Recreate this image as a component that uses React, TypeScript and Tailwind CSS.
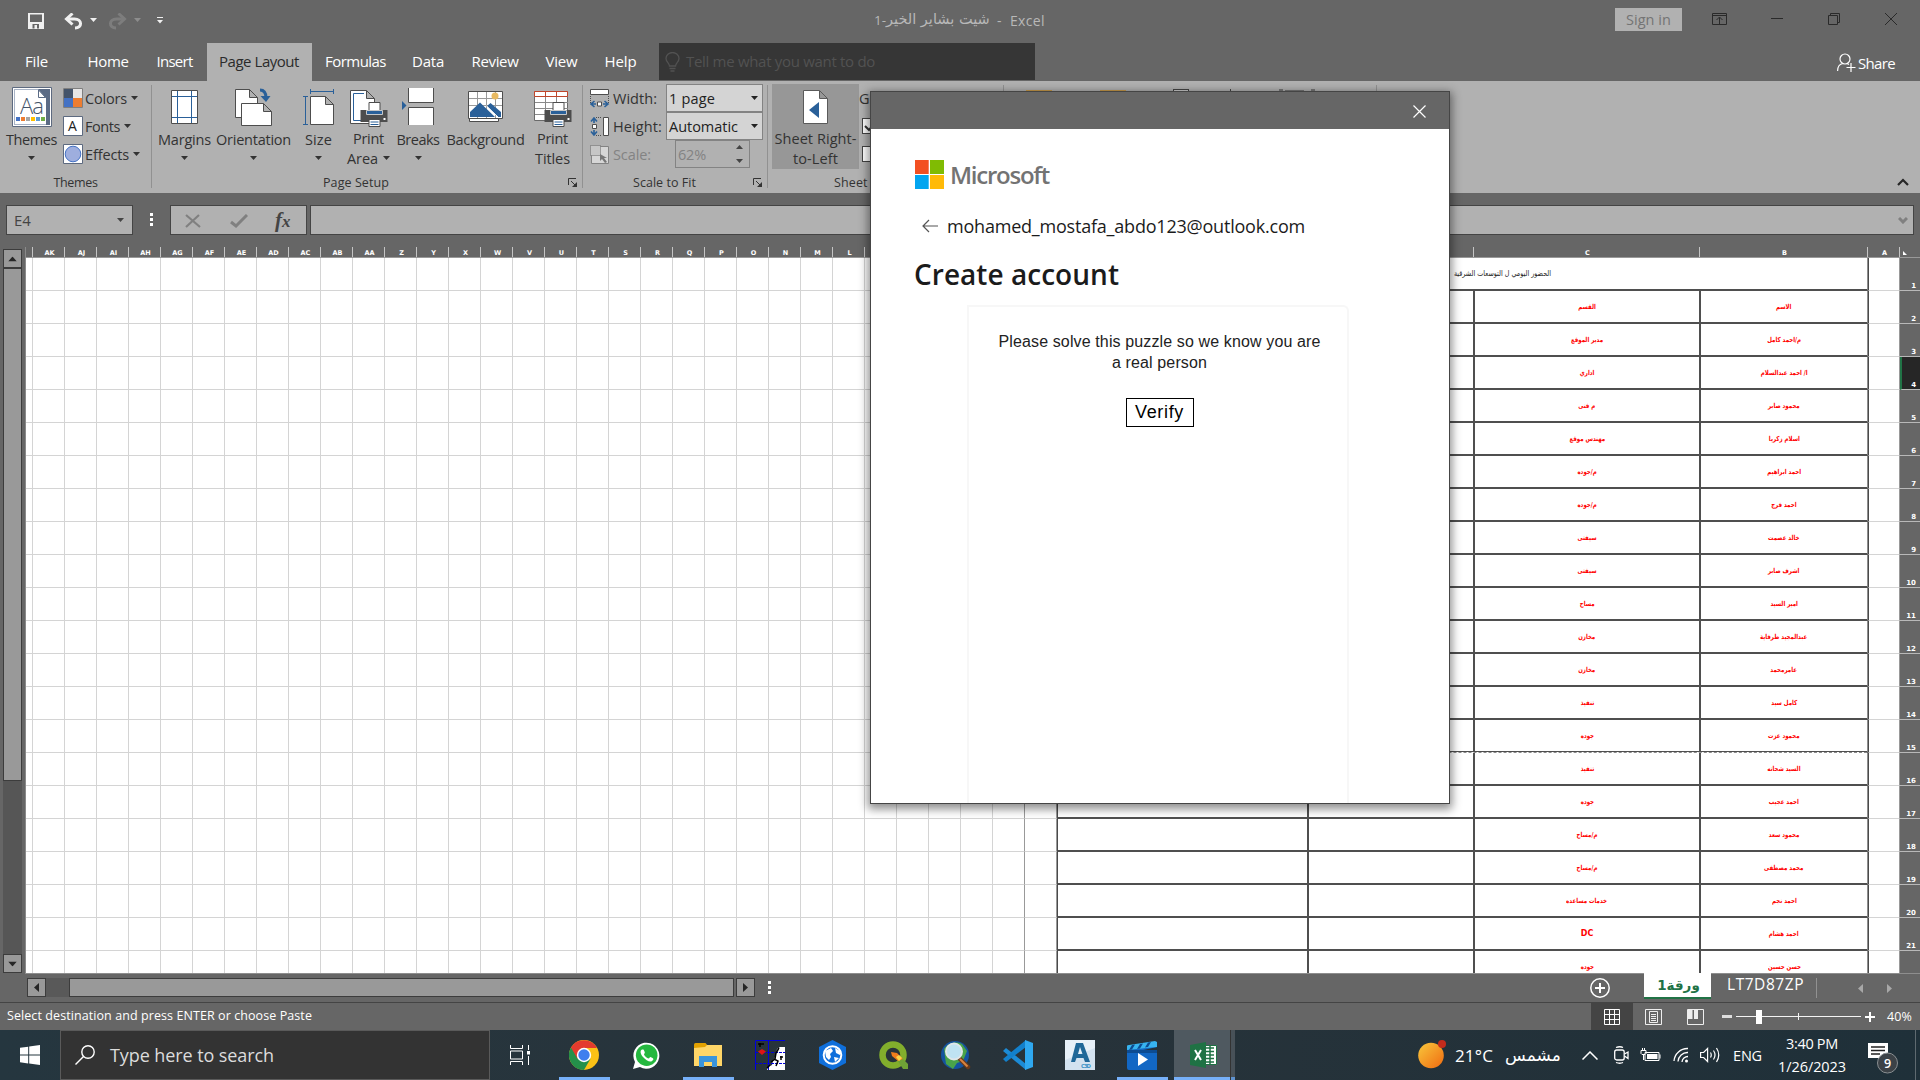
import React, { useLayoutEffect, useRef, useState } from "react";

/* Text that is spaced out to fill a given advance width. */
function Fit({ w, className = "", children }: { w: number; className?: string; children: string }) {
  const ref = useRef<HTMLSpanElement>(null);
  const [gap, setGap] = useState(0);
  useLayoutEffect(() => {
    const el = ref.current;
    if (el) setGap((w - el.getBoundingClientRect().width) / children.length);
  }, [w, children]);
  return (
    <span ref={ref} style={{ letterSpacing: gap }} className={`inline-block whitespace-pre ${className}`}>
      {children}
    </span>
  );
}

const Caret = ({ className = "" }: { className?: string }) => (
  <svg width="7" height="4" viewBox="0 0 7 4" className={className} fill="currentColor">
    <path d="M0 0h7L3.5 4z" />
  </svg>
);

const Launcher = () => (
  <svg width="10" height="10" viewBox="0 0 10 10" fill="none" stroke="#333" className="shrink-0">
    <path d="M.5 7V.5H8M3 3l4.5 4.5" />
    <path d="M9 4v5H4z" fill="#333" stroke="none" />
  </svg>
);

/* ---------- Title bar ---------- */
function TitleBar() {
  return (
    <div className="flex h-[43px] shrink-0 items-start text-[#b8b8b8]">
      <div className="flex h-[40px] w-[874px] items-center pl-7 text-[#f0f0f0]">
        <svg width="16" height="16" viewBox="0 0 16 16" className="mt-[2px]">
          <path d="M0 0h16v16H0z" fill="#f0f0f0" />
          <path d="M2 1.500h12V9H2zM4.500 11H11v4.500H4.500z" fill="#666" />
          <path d="M6.500 12h2.500v4H6.500z" fill="#f0f0f0" />
        </svg>
        <svg width="19" height="17" viewBox="0 0 19 17" className="ml-5 mt-[3px]" fill="none" stroke="currentColor" strokeWidth="3">
          <path d="M3 6h7.500c8 0 8 9 .5 9" />
          <path d="M8.500 .5L2.500 6l6 5.500" />
        </svg>
        <Caret className="ml-[7px]" />
        <svg width="19" height="17" viewBox="0 0 19 17" className="ml-[11px] mt-[3px]" fill="none" stroke="#7d7d7d" strokeWidth="3">
          <path d="M16 6H8.500c-8 0-8 9-.5 9" />
          <path d="M10.500 .5l6 5.500-6 5.500" />
        </svg>
        <Caret className="ml-[7px] text-[#8d8d8d]" />
        <svg width="6" height="7" viewBox="0 0 6 7" className="ml-4" fill="#f0f0f0">
          <path d="M0 0h6v1H0zM0 3h6L3 6.500z" />
        </svg>
      </div>
      <div className="flex h-[40px] w-[741px] items-center text-[13.500px]">
        <span dir="ltr" className="flex w-[115px] items-center whitespace-pre">
          <span>1-</span>
          <bdi dir="rtl" className="inline-block font-['DejaVu_Sans'] text-[14.500px]">شيت بشاير الخير</bdi>
        </span>
        <Fit w={48} className="ml-[8px] text-[14px]">{"-  Excel"}</Fit>
      </div>
      <div className="mt-2 flex h-[23px] w-[67px] items-center justify-center bg-[#b1b1b1] text-[14.500px] text-[#747474]">
        <Fit w={45}>Sign in</Fit>
      </div>
      <svg width="15" height="12" viewBox="0 0 15 12" fill="none" stroke="#2a2a2a" className="ml-[30px] mt-[13px]">
        <path d="M.5.5h14v11H.5zM.5 2.500h14M7.500 11V4.500M4.500 7l3-3 3 3" />
      </svg>
      <svg width="12" height="2" className="ml-11 mt-[18px]"><path d="M0 .5h12" stroke="#2a2a2a" /></svg>
      <svg width="12" height="12" viewBox="0 0 12 12" fill="none" stroke="#2a2a2a" className="ml-[45px] mt-[13px]">
        <path d="M.5 2.500h9v9h-9zM2.500 2.500v-2h9v9h-2" />
      </svg>
      <svg width="12" height="12" viewBox="0 0 12 12" fill="none" stroke="#2a2a2a" className="ml-[45px] mt-[13px]">
        <path d="M0 0l12 12M12 0L0 12" />
      </svg>
    </div>
  );
}

/* ---------- Tab strip ---------- */
const TABS: [string, number, string][] = [
  ["File", 23, "w-[74px]"],
  ["Home", 41, "w-[69px]"],
  ["Insert", 36, "w-[64px]"],
  ["Page Layout", 80, "w-[105px] bg-[#b1b1b1] text-[#2b2b2b]"],
  ["Formulas", 61, "w-[88px]"],
  ["Data", 32, "w-[57px]"],
  ["Review", 47, "w-[77px]"],
  ["View", 32, "w-[56px]"],
  ["Help", 32, "w-[62px]"],
];

function TabStrip() {
  return (
    <div className="flex h-[38px] shrink-0 items-center text-[15px] text-white">
      {TABS.map(([label, w, cls]) => (
        <div key={label} className={`flex h-full items-center justify-center pb-[2px] pr-px ${cls}`}>
          <Fit w={w}>{label}</Fit>
        </div>
      ))}
      <div className="ml-[7px] flex h-[37px] w-[376px] items-center self-start bg-[#363636] pl-[6px] text-[#525252]">
        <svg width="15" height="20" viewBox="0 0 15 20" fill="none" stroke="#525252" strokeWidth="1.300">
          <path d="M4.500 14c0-3-3.500-4-3.500-7.500a6.500 6 0 0 1 13 0C14 10 10.500 11 10.500 14zM4.500 16.500h6M5.500 19h4" />
        </svg>
        <Fit w={189} className="ml-[6px]">Tell me what you want to do</Fit>
      </div>
      <svg width="19" height="19" viewBox="0 0 19 19" fill="none" stroke="#fff" strokeWidth="1.200" className="ml-[802px]">
        <circle cx="8" cy="6" r="5" />
        <path d="M.6 18c0-4 2-7 5.400-7.500M10 10.500l2 1M9.500 14.500h9M14 10v9" />
      </svg>
      <Fit w={37} className="ml-[2px] mt-[2px]">Share</Fit>
    </div>
  );
}

/* ---------- Ribbon ---------- */
function BigButton({ w, icon, a, aw, b, bw, caret, className = "" }: {
  w: string; icon: React.ReactNode; a: string; aw: number; b?: string; bw?: number; caret?: boolean; className?: string;
}) {
  return (
    <div className={`flex h-[85px] shrink-0 flex-col items-center ${w} ${className}`}>
      <div className="flex h-[47px] items-start justify-center">{icon}</div>
      <Fit w={aw} className="leading-5">{a}</Fit>
      <div className="flex h-5 items-center gap-[5px]">
        {b && <Fit w={bw ?? 30} className="leading-5">{b}</Fit>}
        {caret && <Caret className={b ? "-mt-[3px]" : "-mt-[3px]"} />}
      </div>
    </div>
  );
}

const Printer = () => (
  <g>
    <path d="M0 8h27v12H0z" fill="#4d4d4d" />
    <path d="M8.500.5h11V9h-11z" fill="#fff" stroke="#4d4d4d" />
    <path d="M6 8.500h16v4H6z" fill="#2a6099" stroke="#c8c8c8" />
    <path d="M8.500 17.500h11v7h-11z" fill="#fff" stroke="#4d4d4d" />
    <path d="M10 20h8M10 22.500h8" stroke="#2a6099" />
    <path d="M23 16h2v2h-2z" fill="#fff" />
  </g>
);

const ThemesIcon = () => (
  <svg width="40" height="40" viewBox="0 0 40 40" className="mt-[3px]">
    <path d="M.5.5h39v39H.5z" fill="#fff" stroke="#5d6a80" />
    <path d="M2 2h36v36H2z" fill="#a9b4c6" />
    <path d="M3 3h23l8 8v26H3z" fill="#fff" />
    <path d="M26 2h12v36h-4V11z" fill="#5b6b85" />
    <path d="M26.500 3v7.500h7z" fill="#fff" stroke="#5b6b85" />
    <text x="8" y="27" fontSize="22" fill="#44546a" fontFamily="Open Sans" fontWeight="300" textLength="24">Aa</text>
    <g>
      <path d="M4 30h4v4H4z" fill="#4472c4" /><path d="M9 30h4v4H9z" fill="#ed7d31" /><path d="M14 30h4v4h-4z" fill="#a5a5a5" />
      <path d="M19 30h4v4h-4z" fill="#ffc000" /><path d="M24 30h4v4h-4z" fill="#5b9bd5" /><path d="M29 30h4v4h-4z" fill="#70ad47" />
    </g>
  </svg>
);
const MarginsIcon = () => (
  <svg width="27" height="34" viewBox="0 0 27 34" className="mt-[6px]" fill="none">
    <path d="M.5.5h26v33H.5z" fill="#fff" stroke="#4d4d4d" />
    <path d="M6.500 1v32M20.500 1v32M1 6.500h25M1 27.500h25" stroke="#2a6099" />
  </svg>
);
const OrientationIcon = () => (
  <svg width="37" height="38" viewBox="0 0 37 38" className="mt-[4px]" fill="#fff" stroke="#4d4d4d">
    <path d="M.5 1.500h14l8 8v20H.5zM14.500 1.500v8h8" />
    <path d="M6.500 15.500h22l8 8v14h-30zM28.500 15.500v8h8" />
    <path d="M25 2c5 0 6 4 6 8" fill="none" stroke="#2a6099" strokeWidth="3" />
    <path d="M25.500 8h10L31 14z" fill="#2a6099" stroke="none" />
  </svg>
);
const SizeIcon = () => (
  <svg width="31" height="36" viewBox="0 0 31 36" className="mt-[5px]" fill="none">
    <path d="M7.500 7.500h15l8 8v20h-23zM22.500 7.500v8h8" fill="#fff" stroke="#4d4d4d" />
    <path d="M7.500 0v5M30.500 0v5M8 2.500h22M0 7.500h5M0 35.500h5M2.500 8v27" stroke="#2a6099" />
  </svg>
);
const PrintAreaIcon = () => (
  <svg width="38" height="38" viewBox="0 0 38 38" className="mt-[6px]" fill="none">
    <path d="M.5.5h16l8 8v25H.5zM16.500.5v8h8" fill="#fff" stroke="#4d4d4d" />
    <path d="M14 3.500H3.500v27H12" stroke="#2a6099" />
    <g transform="translate(10.500 12)"><Printer /></g>
  </svg>
);
const BreaksIcon = () => (
  <svg width="32" height="37" viewBox="0 0 32 37" className="mt-[4px]" fill="#fff" stroke="#4d4d4d">
    <path d="M6.500 0v14.500h25V0M6.500 37V19.500h25V37" />
    <path d="M0 13l4.500 4.500L0 22z" fill="#2a6099" stroke="none" />
  </svg>
);
const BackgroundIcon = () => (
  <svg width="35" height="33" viewBox="0 0 35 33" className="mt-[6px]" fill="none">
    <path d="M1.500 28.500h29v3h-29z" fill="#fff" stroke="#4d4d4d" />
    <path d="M.5 1.500h34v27H.5z" fill="#fff" stroke="#4d4d4d" />
    <path d="M9.500 2v26M18.500 2v26M27.500 2v26M1 8.500h33M1 15.500h33" stroke="#9a9a9a" />
    <circle cx="27" cy="6" r="3.500" fill="#e8b960" />
    <path d="M2 27V22L12 12.500 27 27zM19 16l3.500-3L33 22v5h-3z" fill="#2a6099" />
    <path d="M18.500 16l11.500 11" stroke="#fff" />
  </svg>
);
const PrintTitlesIcon = () => (
  <svg width="38" height="38" viewBox="0 0 38 38" className="mt-[6px]" fill="none">
    <path d="M.5 1.500h33v29H.5z" fill="#fff" stroke="#6a6a6a" />
    <path d="M11.500 7v23M22.500 7v23M1 12.500h33M1 18.500h33M1 24.500h33" stroke="#8a8a8a" />
    <path d="M.5 1.500h33v5H.5zM11.500 2v5M22.500 2v5" stroke="#c0452a" fill="#fff" />
    <g transform="translate(10.500 12)"><Printer /></g>
  </svg>
);
const SheetIcon = () => (
  <svg width="25" height="34" viewBox="0 0 25 34" className="mt-[6px]">
    <path d="M.5.5h16l8 8v25H.5zM16.500.5v8h8" fill="#fff" stroke="#5a5a5a" />
    <path d="M16 12v16L6 20z" fill="#2a6099" />
  </svg>
);

const Divider = () => <div className="mt-1 h-[103px] w-px shrink-0 bg-[#919191]" />;

function Ribbon() {
  return (
    <div className="flex h-[112px] shrink-0 overflow-hidden bg-[#b1b1b1] text-[14.500px] text-[#333]">
      <div className="flex h-full w-[151px] shrink-0 flex-col">
        <div className="flex h-[88px] pt-[3px]">
          <BigButton w="w-[63px]" icon={<ThemesIcon />} a="Themes" aw={51} caret />
          <div className="flex flex-col">
            <div className="flex h-7 items-center">
              <svg width="20" height="20" viewBox="0 0 20 20">
                <path d="M.5.5h19v19H.5z" fill="#e7e6e6" stroke="#7f7f7f" />
                <path d="M1 1h9v9H1z" fill="#44546a" /><path d="M1 10h9v9H1z" fill="#4472c4" /><path d="M10 10h9v9h-9z" fill="#ed7d31" />
              </svg>
              <Fit w={42} className="ml-[2px] mt-[2px]">Colors</Fit><Caret className="ml-[4px]" />
            </div>
            <div className="flex h-7 items-center">
              <svg width="20" height="20" viewBox="0 0 20 20">
                <path d="M.5.5h19v19H.5z" fill="#fff" stroke="#5d6a80" />
                <text x="5" y="15" fontSize="14" fill="#222" fontFamily="Open Sans">A</text>
              </svg>
              <Fit w={35} className="ml-[2px] mt-[2px]">Fonts</Fit><Caret className="ml-[4px]" />
            </div>
            <div className="flex h-7 items-center">
              <svg width="20" height="20" viewBox="0 0 20 20">
                <path d="M.5.5h19v19H.5z" fill="#fff" stroke="#5d6a80" />
                <circle cx="10" cy="10" r="7.800" fill="#9eaede" stroke="#4472c4" />
              </svg>
              <Fit w={44} className="ml-[2px] mt-[2px]">Effects</Fit><Caret className="ml-[4px]" />
            </div>
          </div>
        </div>
        <div className="flex justify-center pt-[5px] text-[12.500px] leading-[18px]"><Fit w={44}>Themes</Fit></div>
      </div>
      <Divider />
      <div className="flex h-full w-[430px] shrink-0 flex-col">
        <div className="flex h-[88px] pt-[3px]">
          <BigButton w="w-[65px]" icon={<MarginsIcon />} a="Margins" aw={53} caret />
          <BigButton w="w-[73px]" icon={<OrientationIcon />} a="Orientation" aw={75} caret />
          <BigButton w="w-[57px]" icon={<SizeIcon />} a="Size" aw={27} caret />
          <BigButton w="w-[43px]" icon={<PrintAreaIcon />} a="Print" aw={31} b="Area" bw={31} caret />
          <BigButton w="w-[56px]" icon={<BreaksIcon />} a="Breaks" aw={43} caret />
          <BigButton w="w-[79px]" icon={<BackgroundIcon />} a="Background" aw={78} />
          <BigButton w="w-[55px]" icon={<PrintTitlesIcon />} a="Print" aw={31} b="Titles" bw={35} />
        </div>
        <div className="flex items-center pt-[5px] text-[12.500px] leading-[18px]">
          <Fit w={66} className="ml-[171px]">Page Setup</Fit>
          <div className="ml-[179px]"><Launcher /></div>
        </div>
      </div>
      <Divider />
      <div className="flex h-full w-[184px] shrink-0 flex-col">
        <div className="flex h-[88px] flex-col pt-[3px]">
          <div className="flex h-7 items-center">
            <svg width="20" height="19" viewBox="0 0 20 19" className="ml-[7px]" fill="none">
              <path d="M.5.5h18v5H.5z" fill="#fff" stroke="#4d4d4d" />
              <path d="M.5 7v8M18.500 7v8" stroke="#4d4d4d" strokeDasharray="1 1" />
              <path d="M4.500 12L1 15l3.500 3M14.500 12l3.500 3-3.500 3M1 15h5M13 15h5" stroke="#2a6099" strokeWidth="1.600" />
              <path d="M7.500 13h4v4h-4z" fill="#fff" stroke="#4d4d4d" />
            </svg>
            <Fit w={44} className="ml-[3px] mt-[2px]">Width:</Fit>
            <div className="ml-[9px] flex h-[28px] w-[97px] items-center justify-between border border-[#838383] bg-[#d4d4d4] pl-[2px] pr-1 text-[#222]"><Fit w={46} className="mt-[2px]">1 page</Fit><Caret /></div>
          </div>
          <div className="flex h-7 items-center">
            <svg width="20" height="19" viewBox="0 0 20 19" className="ml-[7px]" fill="none">
              <path d="M13.500.5h5v18h-5z" fill="#fff" stroke="#4d4d4d" />
              <path d="M6 .5h6M6 18.500h6" stroke="#4d4d4d" strokeDasharray="1 1" />
              <path d="M1 4.500L4 1l3 3.500M1 14.500L4 18l3-3.500M4 1v5M4 13v5" stroke="#2a6099" strokeWidth="1.600" />
              <path d="M2.500 7.500h4v4h-4z" fill="#fff" stroke="#4d4d4d" />
            </svg>
            <Fit w={49} className="ml-[3px] mt-[2px]">Height:</Fit>
            <div className="ml-[4px] flex h-[28px] w-[97px] items-center justify-between border border-[#838383] bg-[#d4d4d4] pl-[2px] pr-1 text-[#222]"><Fit w={69} className="mt-[2px]">Automatic</Fit><Caret /></div>
          </div>
          <div className="flex h-7 items-center text-[#838383]">
            <svg width="20" height="19" viewBox="0 0 20 19" className="ml-[7px]" fill="none">
              <path d="M1.500 1.500h17v17h-17z" fill="#d6d6d6" stroke="#838383" />
              <path d="M.5.5h10v10H.5z" stroke="#666" fill="#c6c6c6" strokeDasharray="1 1" />
              <path d="M10 9v7l2-2 3 4 2-1-3-4h3z" fill="#777" />
            </svg>
            <Fit w={38} className="ml-[3px] mt-[2px]">Scale:</Fit>
            <div className="ml-[24px] flex h-[28px] w-[75px] items-center justify-between border border-[#838383] pl-[2px] pr-[6px]">
              <Fit w={28} className="mt-[2px]">62%</Fit>
              <span className="flex flex-col gap-[10px] text-[#444]"><Caret className="rotate-180" /><Caret /></span>
            </div>
          </div>
        </div>
        <div className="flex items-center pt-[5px] text-[12.500px] leading-[18px]">
          <Fit w={63} className="ml-[50px]">Scale to Fit</Fit>
          <div className="ml-[57px]"><Launcher /></div>
        </div>
      </div>
      <Divider />
      <div className="flex h-full w-[235px] shrink-0 flex-col pl-1">
        <div className="flex h-[88px] pt-[3px]">
          <BigButton w="w-[87px]" className="bg-[#979797]" icon={<SheetIcon />} a="Sheet Right-" aw={82} b="to-Left" bw={45} />
          <div className="flex flex-col">
            <div className="flex h-7 items-center pt-[2px]">Gridlines</div>
            <div className="ml-[3px] mt-[6px] flex h-4 w-4 border border-[#444] bg-white">
              <svg width="14" height="14" viewBox="0 0 14 14" fill="none" stroke="#333" strokeWidth="2"><path d="M2 7l4 4 6-8" /></svg>
            </div>
            <div className="ml-[3px] mt-[12px] h-4 w-4 border border-[#444] bg-white" />
          </div>
        </div>
        <div className="pl-[62px] pt-[5px] text-[12.500px] leading-[18px]"><Fit w={84}>Sheet Options</Fit></div>
      </div>
      <Divider />
      <div className="flex w-[372px] shrink-0 items-start pt-[8px]">
        <div className="ml-[22px] mt-px h-[10px] w-[26px] bg-[#c99b4c]" />
        <div className="ml-[48px] mt-px h-[10px] w-[26px] bg-[#c99b4c]" />
        <div className="ml-[47px] h-[10px] w-[16px] border border-[#444] bg-[#ccc]" />
        <div className="ml-[41px] h-[10px] w-px bg-[#444]" />
        <div className="ml-[48px] h-[10px] w-[4px] bg-[#777]" />
        <div className="ml-[2px] mt-px h-[10px] w-[19px] bg-[#777]" />
        <div className="ml-[7px] h-[10px] w-[4px] bg-[#777]" />
      </div>
      <Divider />
      <svg width="12" height="8" viewBox="0 0 12 8" className="ml-auto mr-[11px] mt-[97px]" fill="none" stroke="#262626" strokeWidth="2.200">
        <path d="M1 7l5-5 5 5" />
      </svg>
    </div>
  );
}

/* ---------- Formula bar ---------- */
function FormulaBar() {
  return (
    <div className="flex h-[54px] shrink-0 pl-[6px] pt-3">
      <div className="flex h-[30px] w-[127px] items-center justify-between border border-[#444] bg-[#b1b1b1] pl-[7px] pr-[8px] text-[15px] text-[#444]">
        <Fit w={17} className="mt-px">E4</Fit><Caret />
      </div>
      <div className="ml-[17px] mt-2 flex h-[13px] w-[3px] flex-col justify-between">
        <i className="h-[3px] bg-white" /><i className="h-[3px] bg-white" /><i className="h-[3px] bg-white" />
      </div>
      <div className="ml-[17px] flex h-[30px] w-[137px] items-center border border-[#444] bg-[#b1b1b1]">
        <svg width="16" height="14" viewBox="0 0 16 14" className="ml-[14px] mt-px" stroke="#808080" strokeWidth="2.200"><path d="M1 1l14 12M14 1L1 13" /></svg>
        <svg width="18" height="14" viewBox="0 0 18 14" className="ml-[29px] mt-px" fill="none" stroke="#808080" strokeWidth="3"><path d="M1 8l5 4L17 1" /></svg>
        <span className="ml-[27px] font-['Liberation_Serif'] text-[21px] font-bold italic leading-none text-[#444]">f<span className="text-[17px]">x</span></span>
      </div>
      <div className="ml-[3px] flex h-[30px] w-[1604px] items-center justify-end border border-[#444] bg-[#b1b1b1] pr-[5px]">
        <svg width="10" height="7" viewBox="0 0 10 7" fill="none" stroke="#808080" strokeWidth="3"><path d="M1 1l4 4 4-4" /></svg>
      </div>
    </div>
  );
}

/* ---------- Worksheet ---------- */
const LEFT_COLUMNS = [
  "AK", "AJ", "AI", "AH", "AG", "AF", "AE", "AD", "AC", "AB", "AA", "Z", "Y", "X", "W", "V", "U", "T", "S", "R", "Q",
  "P", "O", "N", "M", "L", "K", "J", "I", "H", "G", "F",
];

const ROWS: [string, string][] = [
  ["", ""],
  ["القسم", "الاسم"],
  ["مدير الموقع", "م/احمد كامل"],
  ["اداري", "ا/ احمد عبدالسلام"],
  ["م فنى", "محمود صابر"],
  ["مهندس موقع", "اسلام زكريا"],
  ["م/جوده", "احمد ابراهيم"],
  ["م/جوده", "احمد فرج"],
  ["سيفتى", "خالد عصمت"],
  ["سيفتى", "اشرف صابر"],
  ["مساح", "امير السيد"],
  ["مخازن", "عبدالمجيد طرفاية"],
  ["مخازن", "عامرمحمد"],
  ["تنفيذ", "كامل سيد"],
  ["جوده", "محمود عزت"],
  ["تنفيذ", "السيد شحاته"],
  ["جوده", "احمد عجيب"],
  ["م/مساح", "محمود سعد"],
  ["م/مساح", "محمد مصطفى"],
  ["خدمات مساعده", "احمد نجم"],
  ["DC", "احمد هشام"],
  ["جوده", "حسن حسين"],
];

function HeadCell({ w, children }: { w: string; children?: string }) {
  return (
    <div className={`flex h-[10px] shrink-0 items-center justify-center border-r border-[#c4c4c4] pl-[2px] pt-[3px] ${w}`}>{children}</div>
  );
}

function SheetRow({ n, c, b }: { n: number; c: string; b: string }) {
  const line = "border-b-2 border-b-[#4f4f4f]";
  return (
    <div className="relative flex h-[33px] shrink-0">
      <div className="w-[7px] shrink-0 border-b border-r border-[#d4d4d4]" />
      {LEFT_COLUMNS.map((k) => (
        <div key={k} className={`w-8 shrink-0 border-b border-r border-b-[#d4d4d4] ${k === "G" || k === "F" ? "border-r-[#999]" : "border-r-[#d4d4d4]"}`} />
      ))}
      {n === 1 ? (
        <div dir="rtl" className={`flex w-[811px] shrink-0 items-center border-l border-r border-l-[#4a4a4a] border-r-[#8e8e8e] pr-[316px] text-[8px] font-normal text-[#222] ${line}`}>
          <span className="origin-right scale-x-80 whitespace-pre">{"الحضور اليومي ل التوسعات الشرقية   _"}</span>
        </div>
      ) : (
        <>
          <div className={`w-[252px] shrink-0 border-l border-r-2 border-l-[#4a4a4a] border-r-[#4f4f4f] ${line}`} />
          <div className={`w-[166px] shrink-0 border-r-2 border-r-[#4f4f4f] ${line}`} />
          <div dir="rtl" className={`flex w-[226px] shrink-0 items-center justify-center whitespace-nowrap border-r-2 border-r-[#4f4f4f] pt-px ${line}`}>
            <span className={c === "DC" ? "text-[8px]" : "scale-x-80"}>{c}</span>
          </div>
          <div dir="rtl" className={`flex w-[167px] shrink-0 items-center justify-center whitespace-nowrap border-r border-r-[#8e8e8e] pt-px ${line}`}>
            <span className="scale-x-80">{b}</span>
          </div>
        </>
      )}
      {n === 15 && <div className="absolute bottom-0 left-[1032px] h-px w-[809px] border-t border-dashed border-[#8a8a8a] bg-white" />}
      <div className="w-8 shrink-0 border-b border-l border-r border-b-[#d4d4d4] border-l-[#4a4a4a] border-r-[#999]" />
      <div className={`flex w-5 shrink-0 items-end justify-end border-b border-[#b8b8b8] pr-[4px] font-['DejaVu_Sans'] text-[7px] font-bold leading-[8px] text-white ${n === 4 ? "border-l-2 border-l-[#217346] bg-[#262626]" : "bg-[#666]"}`}>
        {n <= 21 ? n : ""}
      </div>
    </div>
  );
}

function Sheet() {
  return (
    <div className="flex h-[727px] shrink-0">
      <div className="flex w-[26px] shrink-0 flex-col border-r border-[#8a8a8a] pl-[3px] pt-[2px]">
        <div className="flex h-[19px] w-[19px] items-center justify-center border border-[#3c3c3c] bg-[#999] text-[#262626]"><Caret className="rotate-180 scale-125" /></div>
        <div className="h-[513px] w-[19px] border border-[#3c3c3c] bg-[#999]" />
        <div className="h-[173px] w-[19px] bg-[#565656]" />
        <div className="flex h-[19px] w-[19px] items-center justify-center border border-[#3c3c3c] bg-[#999] text-[#262626]"><Caret className="scale-125" /></div>
      </div>
      <div className="flex w-[1894px] shrink-0 flex-col overflow-hidden">
        <div className="flex h-[11px] shrink-0 border-b border-[#999] font-['DejaVu_Sans'] text-[6.500px] font-bold leading-none text-white">
          <HeadCell w="w-[7px]" />
          {LEFT_COLUMNS.map((k) => <HeadCell key={k} w="w-8">{k}</HeadCell>)}
          <HeadCell w="w-[251px]">E</HeadCell>
          <HeadCell w="w-[166px]">D</HeadCell>
          <HeadCell w="w-[226px]">C</HeadCell>
          <HeadCell w="w-[168px]">B</HeadCell>
          <HeadCell w="w-[32px]">A</HeadCell>
          <svg width="4" height="4" viewBox="0 0 4 4" className="ml-[3px] mt-[4px]"><path d="M0 0v4h4z" fill="#fff" /></svg>
        </div>
        <div className="flex h-[715px] shrink-0 flex-col overflow-hidden bg-white font-['DejaVu_Sans'] text-[6.800px] font-bold text-[#ff0000]">
          {ROWS.map(([c, b], i) => <SheetRow key={i} n={i + 1} c={c} b={b} />)}
        </div>
        <div className="h-px shrink-0 bg-[#8e8e8e]" />
      </div>
    </div>
  );
}

function SheetTabs() {
  return (
    <div className="flex h-[29px] shrink-0 items-start border-b border-[#444] pl-[27px]">
      <div className="mt-1 flex h-[19px] w-[19px] items-center justify-center border border-[#3c3c3c] bg-[#999]">
        <svg width="5" height="9"><path d="M5 0v9L0 4.500z" fill="#262626" /></svg>
      </div>
      <div className="mt-1 h-[19px] w-[23px] bg-[#595959]" />
      <div className="mt-1 h-[19px] w-[665px] border border-[#3c3c3c] bg-[#999]" />
      <div className="ml-[2px] mt-1 flex h-[19px] w-[19px] items-center justify-center border border-[#3c3c3c] bg-[#999]">
        <svg width="5" height="9"><path d="M0 0v9l5-4.500z" fill="#262626" /></svg>
      </div>
      <div className="ml-[13px] mt-[7px] flex h-[13px] w-[3px] flex-col justify-between">
        <i className="h-[3px] bg-white" /><i className="h-[3px] bg-white" /><i className="h-[3px] bg-white" />
      </div>
      <svg width="20" height="20" viewBox="0 0 20 20" className="ml-[819px] mt-1" fill="none" stroke="#fff">
        <circle cx="10" cy="10" r="9.200" strokeWidth="1.500" /><path d="M10 5v10M5 10h10" strokeWidth="2" />
      </svg>
      <div className="-mt-px ml-[34px] flex h-[26px] w-[67px] items-center justify-center border-b-2 border-[#217346] bg-white pl-[2px] font-['DejaVu_Sans'] text-[13.500px] font-bold text-[#217346]">
        <span dir="rtl">ورقة1</span>
      </div>
      <Fit w={77} className="ml-4 text-[15.500px] leading-[20px] text-white">LT7D87ZP</Fit>
      <div className="ml-3 mt-1 h-5 w-px bg-[#919191]" />
      <svg width="5" height="9" className="ml-[41px] mt-[10px]"><path d="M5 0v9L0 4.500z" fill="#a8a8a8" /></svg>
      <svg width="5" height="9" className="ml-[24px] mt-[10px]"><path d="M0 0v9l5-4.500z" fill="#a8a8a8" /></svg>
    </div>
  );
}

function StatusBar() {
  return (
    <div className="flex h-[27px] shrink-0 items-center text-[12.500px] text-white">
      <Fit w={305} className="ml-[7px]">Select destination and press ENTER or choose Paste</Fit>
      <div className="ml-[1279px] flex h-full w-[42px] items-center justify-center bg-[#444]">
        <svg width="16" height="16" viewBox="0 0 16 16" fill="none" stroke="#fff"><path d="M.5.500h15v15H.5zM5.500 0v16M10.500 0v16M0 5.500h16M0 10.500h16" /></svg>
      </div>
      <svg width="17" height="16" viewBox="0 0 17 16" fill="none" stroke="#eee" className="ml-[12px]">
        <path d="M.5.500h16v15H.5zM4.500 2.500h8v11h-8zM6 5.500h5M6 7.500h5M6 9.500h5M6 11.500h5" />
      </svg>
      <svg width="17" height="16" viewBox="0 0 17 16" fill="none" stroke="#eee" className="ml-[25px]">
        <path d="M.5.500h16v15H.5z" /><path d="M1 1h4.500v9H1zM7 1h4v9H7z" fill="#eee" stroke="none" />
      </svg>
      <div className="ml-[18px] h-[3px] w-[10px] bg-[#ddd]" />
      <svg width="125" height="16" viewBox="0 0 125 16" className="ml-[4px]"><path d="M0 7.500h125M62.500 4v7" stroke="#f4f4f4" /><path d="M20 1h6v14h-6z" fill="#fff" /></svg>
      <svg width="10" height="10" className="ml-[4px]"><path d="M0 5h10M5 0v10" stroke="#fff" strokeWidth="2" /></svg>
      <Fit w={25} className="ml-3 mt-px">40%</Fit>
    </div>
  );
}

/* ---------- Taskbar ---------- */
function TaskbarItem({ children, open }: { children: React.ReactNode; open?: boolean }) {
  return (
    <div className="flex h-full w-[62px] shrink-0 flex-col items-center">
      <div className="flex h-[47px] items-center justify-center pt-[3px]">{children}</div>
      {open && <div className="h-[3px] w-[51px] bg-[#76b0f9]" />}
    </div>
  );
}

function Taskbar() {
  return (
    <div className="flex h-[50px] shrink-0 bg-linear-to-r from-[#25363f] via-[#28333a] to-[#1f3039] text-white">
      <div className="flex w-[60px] items-center justify-center">
        <svg width="20" height="20" viewBox="0 0 20 20" fill="#fff"><path d="M0 2.800L8.200 1.700v7.900H0zM9.200 1.500L20 0v9.600H9.200zM0 10.600h8.200v7.800L0 17.300zM9.200 10.600H20V20L9.200 18.500z" /></svg>
      </div>
      <div className="flex w-[430px] items-center border border-[#5a5a5a] bg-[#333] pl-[14px]">
        <svg width="20" height="20" viewBox="0 0 20 20" fill="none" stroke="#fff" strokeWidth="1.400"><circle cx="13" cy="7" r="6.200" /><path d="M8.500 11.500L.5 19.500" /></svg>
        <Fit w={164} className="ml-[15px] text-[18px] text-[#dcdcdc]">Type here to search</Fit>
      </div>
      <div className="flex w-[63px] items-center pl-5">
        <svg width="20" height="20" viewBox="0 0 20 20" fill="none" stroke="#fff">
          <path d="M.5 0v3.500h12V0M.5 20v-3.500h12V20M.5 6h12v8H.5zM18.500 0v5M18.500 11v9" /><path d="M17 6h3v3.500h-3z" fill="#fff" stroke="none" />
        </svg>
      </div>
      <TaskbarItem open>
        <svg width="30" height="30" viewBox="0 0 30 30">
          <circle cx="15" cy="15" r="15" fill="#fbc116" />
          <path d="M2 7.500A15 15 0 0 0 15 30l6.500-11.200L15 15z" fill="#24904a" />
          <path d="M2 7.500l6.500 11.300L15 8h13a15 15 0 0 0-26-.5z" fill="#e33b2e" />
          <circle cx="15" cy="15" r="7.200" fill="#fff" /><circle cx="15" cy="15" r="5.700" fill="#3f7fee" />
        </svg>
      </TaskbarItem>
      <TaskbarItem>
        <svg width="27" height="27" viewBox="0 0 27 27">
          <path d="M0 27l2-7a13 13 0 1 1 5 5z" fill="#fff" />
          <circle cx="13.700" cy="13.200" r="10.800" fill="#25b83f" />
          <path d="M9 7.500c-2 1-2 4 1 7.500s7 5.500 9 4 1.500-2.500.5-3l-2-1c-1 0-1 1.500-2 1.500-1.500-.3-4-2.500-4.500-4 0-.8 1-1 .8-2-.3-1-1-3-1.500-3z" fill="#fff" />
        </svg>
      </TaskbarItem>
      <TaskbarItem open>
        <svg width="28" height="24" viewBox="0 0 28 24">
          <path d="M0 1.500Q0 0 1.500 0h10L14 3v4H0z" fill="#e3a100" />
          <path d="M0 5l11-1 2-2h15v21H0z" fill="#ffd668" />
          <path d="M5 13h18v11h-5v-5h-8v5H5z" fill="#3a95dc" />
        </svg>
      </TaskbarItem>
      <TaskbarItem>
        <svg width="30" height="30" viewBox="0 0 30 30">
          <path d="M25 7h5v23H12l1-3 4-2 1-4 3-6 1-6z" fill="#fff" />
          <path d="M.5 30V.5H30M13.500 1v29" stroke="#00d" fill="none" /><path d="M0 12.500h30M0 23.500h30" stroke="#00d" strokeDasharray="3 1" />
          <path d="M3 4h6M5 3v4M24 8l-3 5-1 6-4 3M25 17h3M26 16v4M12 28l3-3M19 19l4 2-2 5" stroke="#000" strokeWidth="1.500" fill="none" />
          <path d="M3 11.500L7 9l4 2.500L7 15z" fill="#e01414" />
        </svg>
      </TaskbarItem>
      <TaskbarItem>
        <svg width="27" height="30" viewBox="0 0 27 30">
          <path d="M13.500 0L27 7v16l-13.500 7L0 23V7z" fill="#0f6fdb" />
          <circle cx="13.500" cy="15" r="8.800" fill="#0f6fdb" stroke="#fff" strokeWidth="2" />
          <path d="M6 11l6-3 2 3-3 3 1 3-2 3-3-3zM16 8l5 3v4l-4-2zM15 17l5 1-4 4z" fill="#fff" />
        </svg>
      </TaskbarItem>
      <TaskbarItem>
        <svg width="30" height="28" viewBox="0 0 30 28">
          <circle cx="14" cy="14" r="10.500" fill="none" stroke="#82ae2c" strokeWidth="6.500" />
          <path d="M17 17l5-1 7 7v5h-5z" fill="#6fa336" />
          <path d="M12 11l6 1 6 6-5 2-6-5z" fill="#f07d1c" /><path d="M17 16l3-2 3 3-3 3z" fill="#f9d548" />
        </svg>
      </TaskbarItem>
      <TaskbarItem>
        <svg width="30" height="30" viewBox="0 0 30 30">
          <circle cx="14" cy="15" r="14" fill="#1553a0" />
          <path d="M3 9c4-6 12-8 18-5l5 7-4 10-6 2-4 6-7-5z" fill="#4aa34a" />
          <path d="M19 19l8 8" stroke="#6b3a1a" strokeWidth="4.500" strokeLinecap="round" /><path d="M19 19l7.500 7.500" stroke="#d98440" strokeWidth="2" />
          <circle cx="13" cy="11.500" r="8" fill="#bfe3f2" stroke="#dfe6ea" strokeWidth="2" />
        </svg>
      </TaskbarItem>
      <TaskbarItem>
        <svg width="30" height="30" viewBox="0 0 30 30">
          <path d="M0 11l3-3 20 16v6z" fill="#1c8bd6" /><path d="M0 19l3 3L23 7V0z" fill="#1280cc" />
          <path d="M22 0l8 3v24l-8 3z" fill="#2fa8f0" />
        </svg>
      </TaskbarItem>
      <TaskbarItem>
        <svg width="30" height="30" viewBox="0 0 30 30">
          <path d="M0 0h30v30H0z" fill="#e7f0f8" /><path d="M0 20L30 8v22H0z" fill="#d3e2f0" />
          <path d="M6 22L11 3h7l7 19h-5l-1.500-4h-7L10 22zM13 14h4.500L15 7z" fill="#1f6798" fillRule="evenodd" />
          <text x="16" y="28" fontSize="6" fontWeight="700" fill="#2f8cc4" fontFamily="Open Sans" textLength="10">C3D</text>
        </svg>
      </TaskbarItem>
      <TaskbarItem open>
        <svg width="30" height="29" viewBox="0 0 30 29">
          <path d="M0 7l30-6v5L12 10H30v19H2q-2 0-2-2z" fill="#1267c4" />
          <path d="M0 5Q0 4 2 4L28 0l2 1v5L0 9z" fill="#37b4f0" /><path d="M5 4l3-.5-3 5-3 .5zM13 3l3-.5-3 5-3 .5zM21 1.500l3-.5-3 5-3 .5z" fill="#0d4c92" />
          <path d="M0 9h30v3H0z" fill="#0d4c92" /><path d="M11 12l10 6.500L11 25z" fill="#fff" />
        </svg>
      </TaskbarItem>
      <div className="flex h-full w-[62px] shrink-0">
        <div className="ml-px flex h-full w-[56px] flex-col items-center bg-[#4f5960]">
          <div className="flex h-[47px] items-center pl-[3px] pt-[3px]">
            <svg width="27" height="26" viewBox="0 0 27 26">
              <path d="M12 3.500h14.500v19H12z" fill="#fff" stroke="#1f7244" /><path d="M16 6h8M16 9.500h8M16 13h8M16 16.500h8M16 20h8M20 4v18" stroke="#1f7244" strokeWidth="1.500" />
              <path d="M0 3l16-3v26L0 23z" fill="#1f7244" /><path d="M5 8l6 10M11 8L5 18" stroke="#fff" strokeWidth="2" />
            </svg>
          </div>
          <div className="h-[3px] w-full bg-[#76b0f9]" />
        </div>
        <div className="flex w-[5px] flex-col justify-end border-l border-[#333] bg-[#485158]"><div className="h-[3px] bg-[#5f92cf]" /></div>
      </div>
      <div className="flex flex-1 items-center">
        <svg width="30" height="30" viewBox="0 0 30 30" className="ml-[183px]">
          <defs><linearGradient id="sun" x1="0" y1="0" x2="1" y2="1"><stop offset="0" stopColor="#f8c83c" /><stop offset="1" stopColor="#f06a10" /></linearGradient></defs>
          <circle cx="13" cy="15.500" r="12.800" fill="url(#sun)" /><circle cx="24" cy="4" r="4" fill="#c42b1c" />
        </svg>
        <Fit w={38} className="ml-[7px] mt-[2px] text-[17px]">21°C</Fit>
        <span dir="rtl" className="ml-3 mt-px w-[56px] whitespace-nowrap text-center font-['DejaVu_Sans'] text-[17px]">مشمس</span>
        <svg width="16" height="9" viewBox="0 0 16 9" className="ml-[21px]" fill="none" stroke="#fff" strokeWidth="1.500"><path d="M.5 8.500L8 1l7.500 7.500" /></svg>
        <svg width="15" height="18" viewBox="0 0 15 18" className="ml-[16px]" fill="none" stroke="#fff" strokeWidth="1.300"><rect x=".7" y="4" width="9.500" height="10" rx="2" /><path d="M10.500 8l3.500-2v6.500L10.500 10M2 1.500Q6 0 9 1.500M2 16.500q4 1.500 7 0" /></svg>
        <svg width="21" height="14" viewBox="0 0 21 14" className="ml-[11px]" fill="none" stroke="#fff"><path d="M5 4.500h14v8H5zM20 6.500v4M1 2.500h5v3l-1 1H2l-1-1zM2.500 0v2M4.500 0v2M3.500 7v5" /><path d="M7 6h10.500v5H7z" fill="#fff" stroke="none" /></svg>
        <svg width="17" height="16" viewBox="0 0 17 16" className="ml-[12px]" fill="none" stroke="#fff" strokeWidth="1.300"><path d="M1 14A13.500 13.500 0 0 1 15 1.500M5 14.500A9.500 9.500 0 0 1 15 5.500M9 15a6 6 0 0 1 6-5.500" /><circle cx="13.500" cy="14" r="1.500" fill="#fff" stroke="none" /></svg>
        <svg width="21" height="16" viewBox="0 0 21 16" className="ml-[10px]" fill="none" stroke="#fff" strokeWidth="1.200"><path d="M.6 5.500h3l4-4v13l-4-4h-3zM10.500 5.500q1.500 2.500 0 5M13.500 3.500q3 4.500 0 9M16.500 1q4.500 7 0 14" /></svg>
        <Fit w={29} className="ml-[12px] mt-px text-[14.500px]">ENG</Fit>
        <div className="ml-[15px] flex w-[70px] flex-col items-center text-[14.500px]">
          <Fit w={52} className="leading-[23px]">3:40 PM</Fit>
          <Fit w={68} className="leading-[23px]">1/26/2023</Fit>
        </div>
        <svg width="31" height="32" viewBox="0 0 31 32" className="ml-[21px] mt-[5px]">
          <path d="M0 1h20v15h-5v5l-5-5H0z" fill="#fff" /><path d="M3 5h14M3 8.500h14M3 12h9" stroke="#222" strokeWidth="1.300" />
          <circle cx="19.500" cy="21" r="10" fill="#3c4247" stroke="#8a8f92" />
          <text x="19.500" y="25.500" fontSize="12.500" fontWeight="600" fill="#fff" textAnchor="middle" fontFamily="Open Sans">9</text>
        </svg>
        <div className="ml-auto mr-1 h-full w-px bg-[#5f6a70]" />
      </div>
    </div>
  );
}

/* ---------- Account dialog ---------- */
function Dialog() {
  return (
    <div className="absolute left-[870px] top-[91px] flex h-[713px] w-[580px] flex-col border border-[#454545] bg-white shadow-[0_3px_9px_2px_rgba(0,0,0,0.45)]">
      <div className="flex h-[37px] shrink-0 items-center justify-end bg-[#666] pr-[23px] pt-px">
        <svg width="13" height="13" viewBox="0 0 13 13" stroke="#fff" strokeWidth="1.200"><path d="M.5.500l12 12M12.500.500l-12 12" /></svg>
      </div>
      <div className="mt-[31px] flex h-[29px] items-center pl-[44px]">
        <svg width="29" height="29" viewBox="0 0 29 29"><path d="M0 0h13.700v14H0z" fill="#f35022" /><path d="M15 0h14v14H15z" fill="#80bb03" /><path d="M0 15h13.700v14H0z" fill="#03a5f0" /><path d="M15 15h14v14H15z" fill="#ffba08" /></svg>
        <Fit w={99} className="ml-[6px] text-[24px] font-semibold leading-none text-[#737373]">Microsoft</Fit>
      </div>
      <div className="mt-[23px] flex h-7 items-center pl-[51px]">
        <svg width="16" height="14" viewBox="0 0 16 14" fill="none" stroke="#555" strokeWidth="1.200"><path d="M16 7H1M7 1L1 7l6 6" /></svg>
        <Fit w={358} className="ml-[9px] text-[18px] text-[#1b1b1b]">mohamed_mostafa_abdo123@outlook.com</Fit>
      </div>
      <div className="mt-[16px] h-[36px] pl-[43px] text-[28px] font-semibold leading-[36px] text-[#1b1b1b]"><Fit w={205}>Create account</Fit></div>
      <div className="ml-[96px] mt-[13px] flex w-[382px] flex-1 flex-col items-center rounded-tr-md border-2 border-b-0 border-[#f7f7f7] pl-[3px] pt-[24px] font-['Liberation_Sans'] text-[16px] leading-[21px] text-[#222]">
        <Fit w={322}>Please solve this puzzle so we know you are</Fit>
        <Fit w={95}>a real person</Fit>
        <button className="mt-[25px] flex h-[29px] w-[68px] items-center justify-center border border-black text-[18px] text-black"><Fit w={49}>Verify</Fit></button>
      </div>
    </div>
  );
}

export default function App() {
  return (
    <div className="relative flex h-[1080px] w-[1920px] flex-col overflow-hidden bg-[#666] font-['Open_Sans','DejaVu_Sans',sans-serif]">
      <TitleBar />
      <TabStrip />
      <Ribbon />
      <FormulaBar />
      <Sheet />
      <SheetTabs />
      <StatusBar />
      <Taskbar />
      <Dialog />
    </div>
  );
}
